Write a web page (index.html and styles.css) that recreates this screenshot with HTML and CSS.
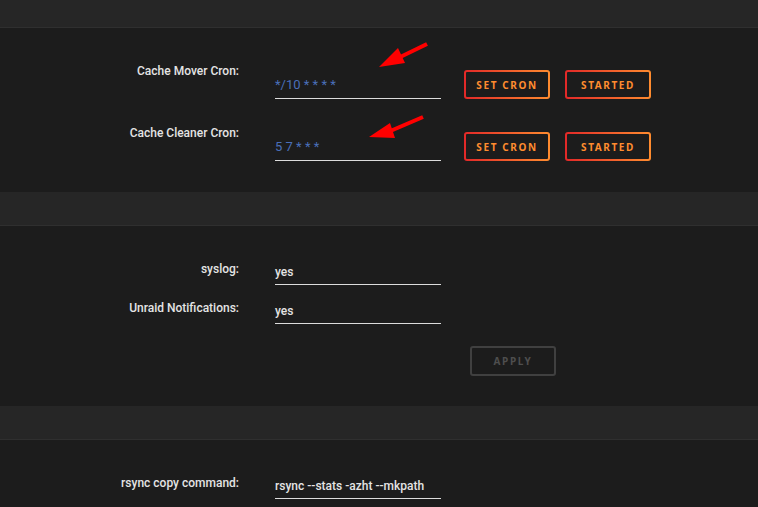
FILE: index.html
```html
<!DOCTYPE html>
<html>
<head>
<meta charset="utf-8">
<link rel="stylesheet" href="styles.css">
</head>
<body>
<div class="band top"></div>
<section class="panel cron-panel">
  <div class="row cron-row">
    <div class="label">Cache Mover Cron:</div>
    <div class="field tall"><span class="cron">*/10 * * * *</span></div>
    <div class="btns">
      <button class="btn">SET CRON</button>
      <button class="btn">STARTED</button>
    </div>
  </div>
  <div class="row cron-row">
    <div class="label">Cache Cleaner Cron:</div>
    <div class="field tall"><span class="cron">5 7 * * *</span></div>
    <div class="btns">
      <button class="btn">SET CRON</button>
      <button class="btn">STARTED</button>
    </div>
  </div>
  <svg class="arrow arrow1" width="60" height="30" viewBox="0 0 60 30"><line x1="57" y1="2" x2="22" y2="19" stroke="#ff0000" stroke-width="4"/><polygon points="9,25 28,6 35,21" fill="#ff0000"/></svg>
  <svg class="arrow arrow2" width="60" height="30" viewBox="0 0 60 30"><line x1="57" y1="2" x2="22" y2="17" stroke="#ff0000" stroke-width="4"/><polygon points="3,22 24,8 29,23" fill="#ff0000"/></svg>
</section>
<div class="band"></div>
<section class="panel settings-panel">
  <div class="row plain-row">
    <div class="label">syslog:</div>
    <div class="field">yes</div>
  </div>
  <div class="row plain-row">
    <div class="label">Unraid Notifications:</div>
    <div class="field">yes</div>
  </div>
  <div class="apply-row"><button class="btn disabled">APPLY</button></div>
</section>
<div class="band"></div>
<section class="panel">
  <div class="row plain-row">
    <div class="label">rsync copy command:</div>
    <div class="field">rsync --stats -azht --mkpath</div>
  </div>
</section>
</body>
</html>
```
FILE: styles.css
```css
html, body {
  margin: 0;
  padding: 0;
  background: #1c1c1c;
  width: 758px;
  height: 507px;
  overflow: hidden;
  font-family: Roboto, "Noto Sans", sans-serif;
  font-size: 12px;
  color: #e4e4e4;
}
.band {
  height: 33px;
  background: #262626;
  border-bottom: 1px solid #2f2f2f;
}
.band.top {
  height: 27px;
}
.panel {
  position: relative;
  padding: 35px 0 30px;
  display: flex;
  flex-direction: column;
}
.cron-panel {
  padding-bottom: 31px;
  gap: 26px;
}
.settings-panel {
  padding-bottom: 30px;
}
.row {
  display: flex;
  align-items: flex-start;
}
.plain-row + .plain-row {
  margin-top: 15px;
}
.label {
  width: 239px;
  text-align: right;
  line-height: 16px;
  font-weight: 500;
  flex: none;
}
.field {
  margin-left: 36px;
  width: 166px;
  height: 21px;
  box-sizing: content-box;
  border-bottom: 1px solid #dcdcdc;
  line-height: 18px;
  padding-top: 2px;
  font-weight: 500;
  flex: none;
  white-space: nowrap;
}
.field.tall {
  height: 22px;
  padding-top: 13px;
}
.cron {
  color: #4a6fb9;
  font-weight: 400;
  font-size: 13px;
}
.btns {
  display: flex;
  gap: 15px;
  margin-left: 23px;
  margin-top: 7px;
}
.btn {
  width: 86px;
  height: 29px;
  box-sizing: border-box;
  border: 2px solid transparent;
  border-radius: 3px;
  background: linear-gradient(#1c1c1c, #1c1c1c) padding-box,
              linear-gradient(90deg, #e22828, #ff8c2f) border-box;
  color: #ff8c2f;
  font-family: "Noto Sans", sans-serif;
  font-size: 10px;
  font-weight: 700;
  letter-spacing: 1.6px;
  padding: 0;
  display: flex;
  align-items: center;
  justify-content: center;
}
.btn.disabled {
  width: 86px;
  height: 30px;
  background: #1c1c1c;
  border: 2px solid #404040;
  color: #4e4e4e;
}
.apply-row {
  margin-top: 22px;
  padding-left: 470px;
}
.arrow {
  position: absolute;
}
.arrow1 {
  left: 370px;
  top: 14px;
}
.arrow2 {
  left: 366px;
  top: 87px;
}
```
